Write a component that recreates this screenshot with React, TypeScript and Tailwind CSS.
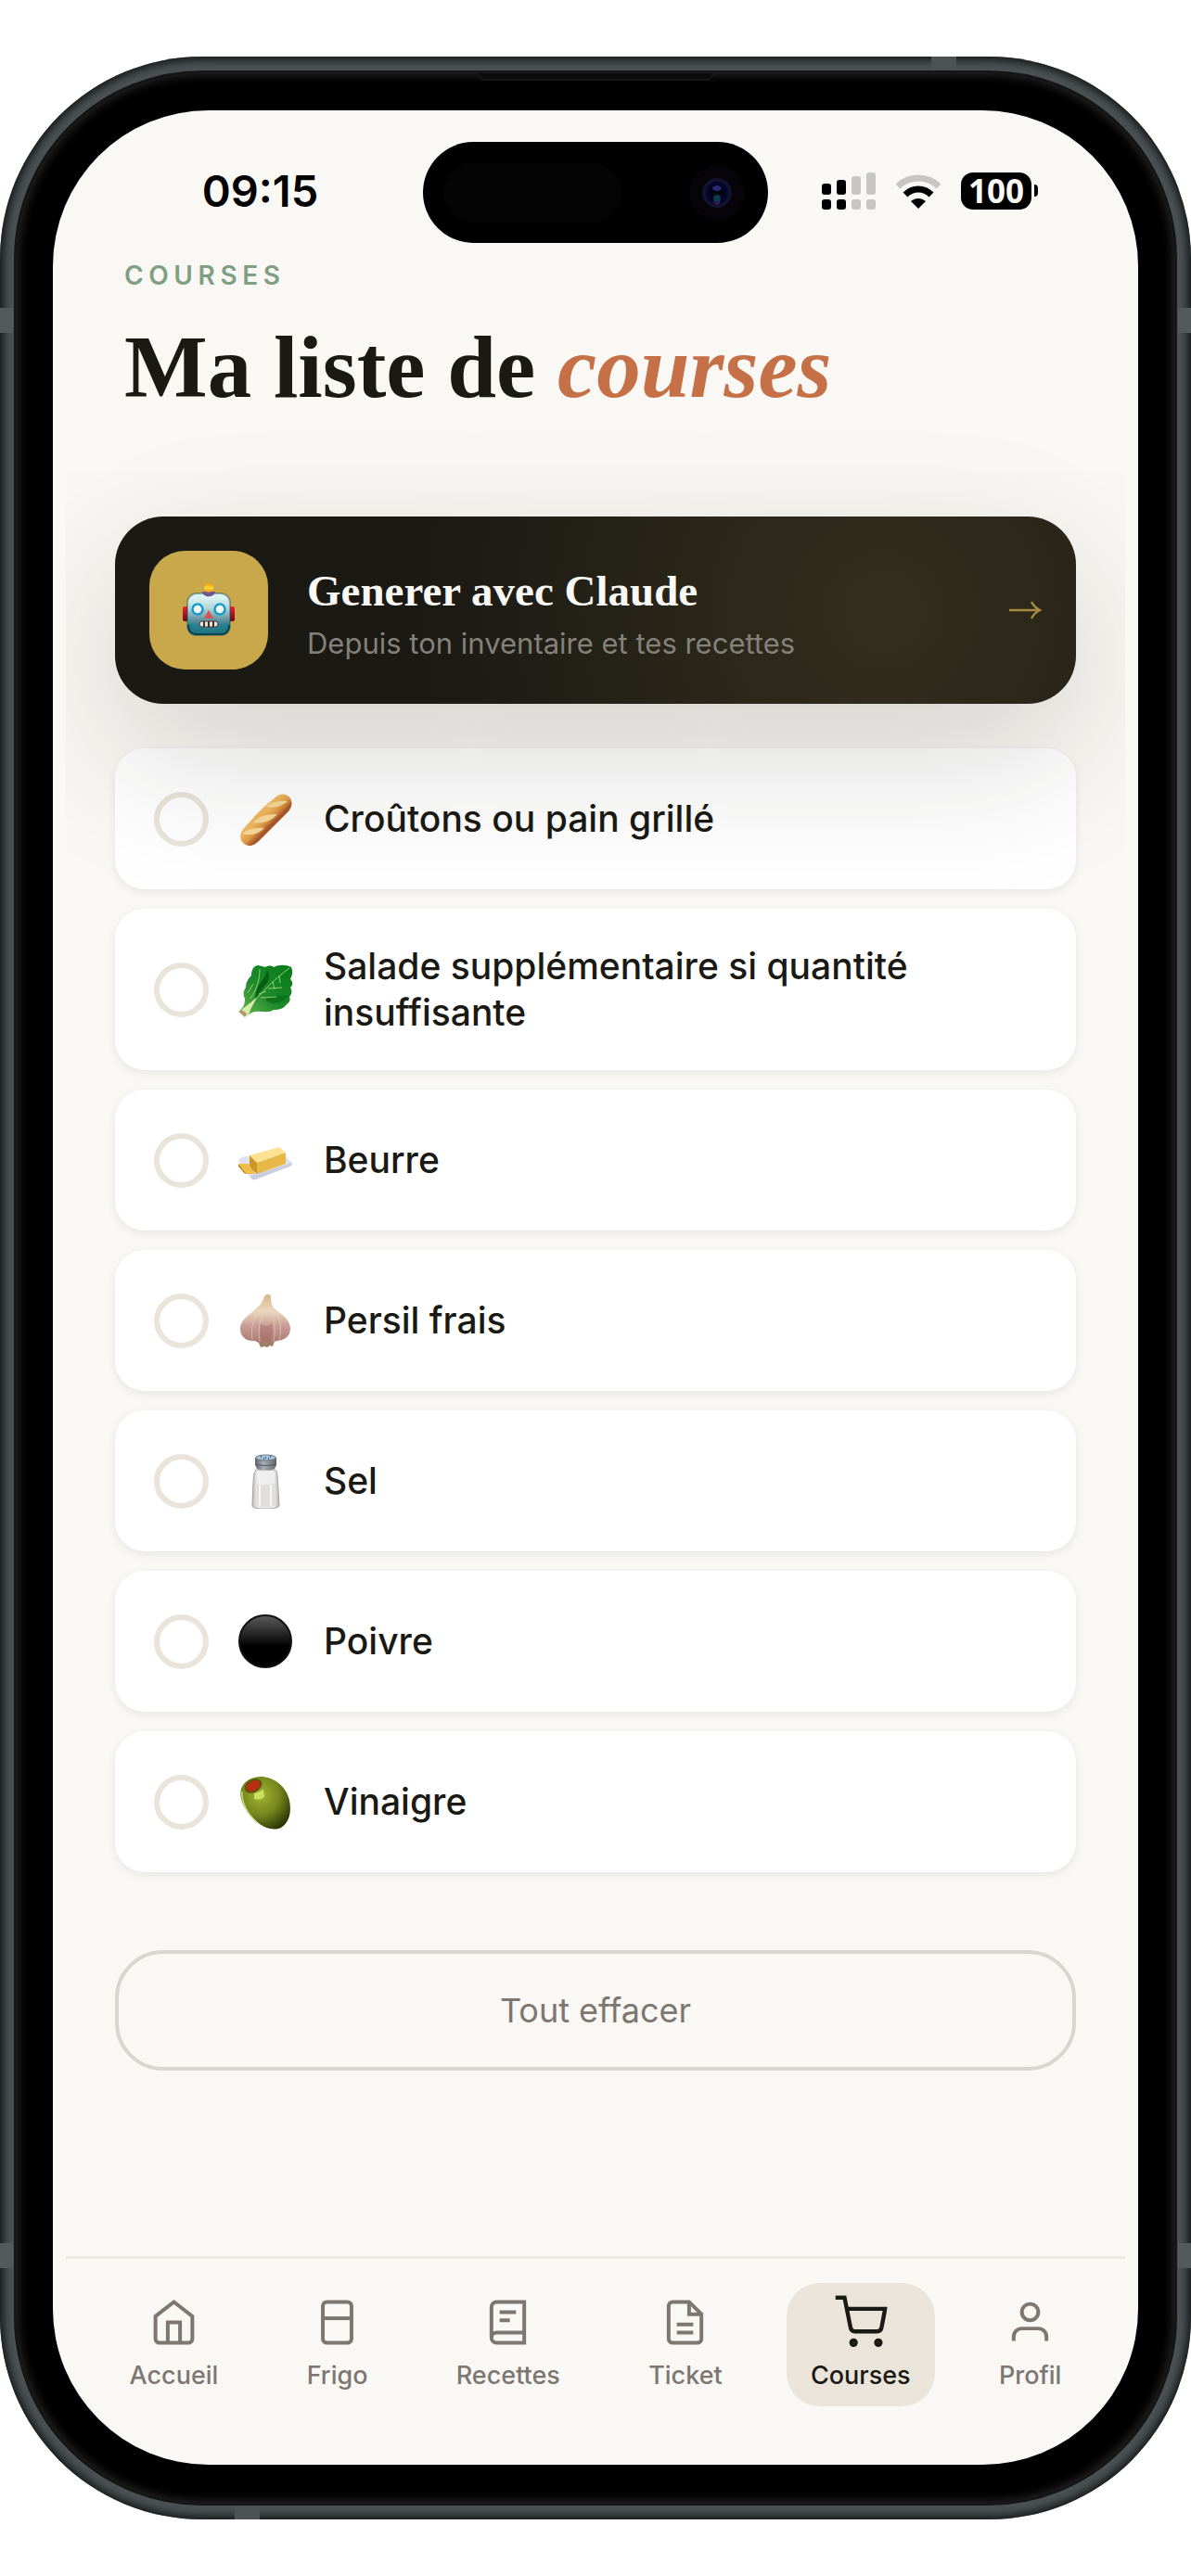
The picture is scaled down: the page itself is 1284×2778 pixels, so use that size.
import React, { useState } from "react";

const BaguetteIcon = () => (
  <svg viewBox="0 0 60 60" className="h-[60px] w-[60px]" aria-hidden="true">
    <defs>
      <linearGradient id="bread" x1="0.3" y1="0.3" x2="0.7" y2="0.7">
        <stop offset="0.3" stopColor="#f0b860" />
        <stop offset="0.55" stopColor="#e09a45" />
        <stop offset="0.75" stopColor="#a9562a" />
      </linearGradient>
    </defs>
    <path
      d="M42 6C47 2 54 3 57 8c3 5 1 11-3 15L24 53c-4 4-10 8-15 5-5-2-7-8-5-13 3-6 9-11 14-17S34 12 42 6z"
      fill="url(#bread)"
    />
    <path d="M30 17c7-5 14-7 24-6-6 5-14 8-24 6z" fill="#f6d999" />
    <path d="M17 34c6-7 14-9 26-9-6 7-16 11-26 9z" fill="#f6d999" />
    <path d="M5 46c6-5 14-7 24-6-6 6-15 9-24 6z" fill="#f6d999" />
  </svg>
);

const LettuceIcon = () => (
  <svg viewBox="0 0 60 60" className="h-[60px] w-[60px]" aria-hidden="true">
    <defs>
      <linearGradient id="leaf" x1="0" y1="1" x2="1" y2="0">
        <stop offset="0.1" stopColor="#5fae48" />
        <stop offset="0.45" stopColor="#1e8a2c" />
        <stop offset="1" stopColor="#067a18" />
      </linearGradient>
    </defs>
    <path
      d="M2 53c4-3 6-7 6-13-2-4-2-8 1-12 0-6 3-10 6-13 0-6 2-10 7-11 3 1 6 1 8 2 3-2 7-2 9 0 6-3 13-3 19 0 2 5 1 9-1 13 3 3 3 6 0 9 2 3 2 7-1 10 2 4-1 7-4 9-2 4-8 5-13 5-4 3-9 2-14 2-6-1-11 1-16 5z"
      fill="url(#leaf)"
    />
    <path d="M32 9c3 5 3 10-1 15L19 40c1-8 3-14 7-19 4-4 5-8 6-12z" fill="#075f14" />
    <path d="M31 38c8-1 15-2 24-1-4 5-9 8-16 8-5 0-9-2-8-7z" fill="#0a6a18" opacity=".7" />
    <path d="M56 7C42 17 27 32 12 50M45 15l1 8M38 21l2 9M48 28l-15 1M42 38l-17 1M31 32l-8 3M24 8c0 9-2 20-10 32M17 24l-6 10" stroke="#8fd070" strokeWidth="1" fill="none" />
    <path d="M2 54c5-5 12-9 18-15-2 7-6 11-7 16l-5 5z" fill="#d8ecae" />
    <path d="M1 54l7 6 2-4-5-4z" fill="#b39a70" />
  </svg>
);

const ButterIcon = () => (
  <svg viewBox="0 0 60 60" className="h-[60px] w-[60px]" aria-hidden="true">
    <path d="M1 31c1-3 4-4 7-5L49 23l9 9c2 2 1 4-2 5L20 50c-3 1-5 1-7-2z" fill="#dfe3f0" />
    <path d="M14 47l45-14c0 2-1 3-3 4L20 51c-3 1-5 0-6-4z" fill="#c9cfdf" />
    <path d="M13 25L45 16l7 6-31 11z" fill="#fde391" />
    <path d="M13 25l8 8v12l-8-7z" fill="#cf9526" />
    <path d="M21 33l31-11v12L21 45z" fill="#e6b847" />
    <path d="M1 34l11 0 7 11H10z" fill="#f0bd4b" />
    <path d="M1 34l9 11H8l-7-8z" fill="#c88a20" />
  </svg>
);

const GarlicIcon = () => (
  <svg viewBox="0 0 60 60" className="h-[60px] w-[60px]" aria-hidden="true">
    <defs>
      <linearGradient id="clove" x1="0" y1="0" x2="0" y2="1">
        <stop offset="0" stopColor="#d9b58d" />
        <stop offset="0.35" stopColor="#ead8bc" />
        <stop offset="0.65" stopColor="#c99b94" />
        <stop offset="1" stopColor="#a87a6e" />
      </linearGradient>
    </defs>
    <path d="M22 52h18l-2 6-3-1-3 2-3-1-4 1z" fill="#9a7f66" />
    <path
      d="M29 4c2-3 6-3 7 0 0 8 1 11 6 15 8 6 15 11 15 20 0 8-7 13-15 13-4 3-18 4-23 0C9 53 3 47 3 39c0-9 8-14 15-20 6-5 9-8 11-15z"
      fill="url(#clove)"
    />
    <path d="M30 15c-8 7-17 15-14 36M30 15c-4 12-9 20-6 38M34 15c5 10 8 22 5 38M35 15c8 8 15 16 10 36" stroke="#ecdccb" strokeWidth="1" fill="none" opacity=".5" />
    <path d="M25 33c-1 8-1 14 1 20h9c3-7 3-13 2-20-4 4-8 4-12 0z" fill="#9d635c" opacity=".4" />
  </svg>
);

const SaltIcon = () => (
  <svg viewBox="0 0 60 60" className="h-[60px] w-[60px]" aria-hidden="true">
    <defs>
      <linearGradient id="glass" x1="0" y1="0" x2="1" y2="0">
        <stop offset="0" stopColor="#b5b5b5" />
        <stop offset="0.2" stopColor="#f0f0f0" />
        <stop offset="0.8" stopColor="#eeeeee" />
        <stop offset="1" stopColor="#b5b5b5" />
      </linearGradient>
      <linearGradient id="cap" x1="0" y1="0" x2="1" y2="0">
        <stop offset="0" stopColor="#5d6368" />
        <stop offset="0.4" stopColor="#a9afb4" />
        <stop offset="1" stopColor="#5d6368" />
      </linearGradient>
    </defs>
    <path d="M20 18h21c3 3 2 12 4 38 0 3-5 4-15 4s-15-1-14-4c1-26 1-35 4-38z" fill="url(#glass)" stroke="#a3a3a3" strokeWidth="1" />
    <path d="M21 32l4 2h11l5-2 1 23-6 3H24l-4-3z" fill="#e1dfdd" />
    <path d="M24 34v23M36 34v23" stroke="#fff" strokeWidth="1.5" />
    <path d="M19 5h23v8l-2 4c-5 2-14 2-19 0l-2-4z" fill="url(#cap)" />
    <path d="M20 12c6 2 15 2 21 0" stroke="#50565b" strokeWidth="1" fill="none" />
    <ellipse cx="30.5" cy="5" rx="11" ry="3" fill="#a8c3dc" stroke="#6c747b" strokeWidth="1" />
    <path d="M25 4h1M30 5h1M35 4h1M28 6h1M33 6h1" stroke="#2c3c4c" strokeWidth="1.5" />
  </svg>
);

const PepperIcon = () => (
  <svg viewBox="0 0 60 60" className="h-[60px] w-[60px]" aria-hidden="true">
    <defs>
      <linearGradient id="ball" x1="0" y1="0" x2="0" y2="1">
        <stop offset="0" stopColor="#5c5c5c" />
        <stop offset="0.6" stopColor="#000" />
      </linearGradient>
    </defs>
    <circle cx="30" cy="30" r="28" fill="url(#ball)" stroke="#111" strokeWidth="2" />
  </svg>
);

const OliveIcon = () => (
  <svg viewBox="0 0 60 60" className="h-[60px] w-[60px]" aria-hidden="true">
    <defs>
      <radialGradient id="olive" cx="0.4" cy="0.35" r="0.7">
        <stop offset="0" stopColor="#a3b433" />
        <stop offset="0.55" stopColor="#75861c" />
        <stop offset="1" stopColor="#2f3a08" />
      </radialGradient>
    </defs>
    <path
      d="M25 3c14 0 26 10 30 22 4 13 2 27-8 33-9 4-20 0-29-9C8 40 1 27 4 16 7 8 15 3 25 3z"
      fill="url(#olive)"
    />
    <path d="M5 19c-1 12 6 25 17 34" stroke="#cbd98a" strokeWidth="1.5" fill="none" />
    <ellipse cx="17" cy="13" rx="10" ry="7" transform="rotate(-28 17 13)" fill="#4c5a10" />
    <ellipse cx="17" cy="13" rx="8.5" ry="5.5" transform="rotate(-28 17 13)" fill="#b5300f" />
    <path d="M18 21c3-1 7-2 10-4l1 8c-3 3-8 3-11 2z" fill="#d5ee6c" opacity=".8" />
  </svg>
);

const RobotIcon = () => (
  <svg viewBox="0 0 60 60" className="h-[60px] w-[60px]" aria-hidden="true">
    <defs>
      <linearGradient id="head" x1="0" y1="0" x2="0" y2="1">
        <stop offset="0.1" stopColor="#dcf3f4" />
        <stop offset="0.35" stopColor="#b4d6da" />
        <stop offset="0.65" stopColor="#5d8f98" />
        <stop offset="0.75" stopColor="#2a8190" />
        <stop offset="1" stopColor="#1d7080" />
      </linearGradient>
      <linearGradient id="bulb" x1="0" y1="0" x2="0" y2="1">
        <stop offset="0" stopColor="#f79a00" />
        <stop offset="0.5" stopColor="#ffd83a" />
        <stop offset="1" stopColor="#f58a12" />
      </linearGradient>
      <linearGradient id="ear" x1="0" y1="0" x2="0" y2="1">
        <stop offset="0" stopColor="#f2202f" />
        <stop offset="1" stopColor="#6a0610" />
      </linearGradient>
    </defs>
    <rect x="2" y="26" width="6" height="16" rx="2" fill="url(#ear)" />
    <rect x="52" y="26" width="6" height="16" rx="2" fill="url(#ear)" />
    <rect x="7" y="12" width="46" height="45" rx="10" fill="url(#head)" stroke="#0d5360" strokeOpacity=".4" strokeWidth="2" />
    <path d="M8 46c0 7 3 10 9 10h26c6 0 9-3 9-10" stroke="#064654" strokeWidth="2" fill="none" />
    <path d="M23 10h14c-1 7-13 7-14 0z" fill="#6d5594" />
    <circle cx="30" cy="6" r="5" fill="url(#bulb)" />
    <circle cx="18" cy="29" r="5.5" fill="#f3fbfd" stroke="#159ccb" strokeWidth="2.5" />
    <circle cx="42" cy="29" r="5.5" fill="#f3fbfd" stroke="#159ccb" strokeWidth="2.5" />
    <path d="M30 30l5 9H25z" fill="#d9505a" />
    <rect x="20" y="42" width="20" height="6" rx="3" fill="#e9e5da" stroke="#4c3e3a" strokeWidth="1" />
    <path d="M25 42v6M30 42v6M35 42v6" stroke="#3b302d" strokeWidth="2" />
  </svg>
);

const ITEMS = [
  { name: "Croûtons ou pain grillé", icon: <BaguetteIcon /> },
  { name: "Salade supplémentaire si quantité insuffisante", icon: <LettuceIcon /> },
  { name: "Beurre", icon: <ButterIcon /> },
  { name: "Persil frais", icon: <GarlicIcon /> },
  { name: "Sel", icon: <SaltIcon /> },
  { name: "Poivre", icon: <PepperIcon /> },
  { name: "Vinaigre", icon: <OliveIcon /> },
];

const TABS = [
  {
    label: "Accueil",
    shape: (
      <>
        <path d="M3 9l9-7 9 7v11a2 2 0 0 1-2 2H5a2 2 0 0 1-2-2z" />
        <path d="M9 22V12h6v10" />
      </>
    ),
  },
  {
    label: "Frigo",
    shape: (
      <>
        <rect x="5" y="2" width="14" height="20" rx="2" />
        <path d="M5 10h14" />
      </>
    ),
  },
  {
    label: "Recettes",
    shape: (
      <>
        <path d="M4 19.5A2.5 2.5 0 0 1 6.5 17H20" />
        <path d="M6.5 2H20v20H6.5A2.5 2.5 0 0 1 4 19.5v-15A2.5 2.5 0 0 1 6.5 2z" />
        <path d="M8 7h8M8 11h5" />
      </>
    ),
  },
  {
    label: "Ticket",
    shape: (
      <>
        <path d="M14 2H6a2 2 0 0 0-2 2v16a2 2 0 0 0 2 2h12a2 2 0 0 0 2-2V8z" />
        <path d="M14 2v6h6M8 13h8M8 17h8" />
      </>
    ),
  },
  {
    label: "Courses",
    active: true,
    shape: (
      <>
        <circle cx="9" cy="21" r="1" />
        <circle cx="20" cy="21" r="1" />
        <path d="M1 1h4l2.68 13.39a2 2 0 0 0 2 1.61h9.72a2 2 0 0 0 2-1.61L23 6H6" />
      </>
    ),
  },
  {
    label: "Profil",
    shape: (
      <>
        <path d="M20 21v-2a4 4 0 0 0-4-4H8a4 4 0 0 0-4 4v2" />
        <circle cx="12" cy="7" r="4" />
      </>
    ),
  },
];

function StatusBar() {
  return (
    <div className="grid grid-cols-[1fr_372px_1fr] items-center pt-[34px]">
      <div className="pb-[4px] pl-[48px] text-center text-[47px] leading-[56px] font-semibold text-black">09:15</div>

      {/* Dynamic island */}
      <div className="flex h-[109px] items-center justify-between rounded-full bg-black pr-[25px] pl-[22px]">
        <div className="h-[65px] w-[192px] rounded-full bg-[#040404]" />
        <svg viewBox="0 0 60 60" className="h-[60px] w-[60px]" aria-hidden="true">
          <circle cx="30" cy="30" r="30" fill="#060408" />
          <circle cx="30" cy="30" r="16" fill="#11142c" />
          <circle cx="30" cy="30" r="12" fill="#050530" />
          <ellipse cx="30" cy="30" rx="8" ry="9" fill="#02030f" />
          <ellipse cx="30" cy="25" rx="5" ry="3" fill="#262b70" />
          <circle cx="30" cy="36" r="4" fill="#0a3a50" />
          <path d="M27 40c2 2 4 2 6 0" stroke="#52206a" strokeWidth="1.5" fill="none" />
        </svg>
      </div>

      <div className="flex items-center justify-center gap-[20px] pr-[50px] pb-[4px]">
        <svg viewBox="0 0 58 40" className="h-[40px] w-[58px]" aria-label="Signal">
          <g fill="#000">
            <rect x="0" y="12" width="10" height="12" rx="3" />
            <rect x="16" y="8" width="10" height="16" rx="3" />
            <rect x="0" y="29" width="10" height="11" rx="3" />
            <rect x="16" y="29" width="10" height="11" rx="3" />
          </g>
          <g fill="#c7c6c2">
            <rect x="32" y="4" width="10" height="20" rx="3" />
            <rect x="48" y="0" width="10" height="24" rx="3" />
            <rect x="32" y="29" width="10" height="11" rx="3" />
            <rect x="48" y="29" width="10" height="11" rx="3" />
          </g>
        </svg>
        <svg viewBox="0 0 52 38" className="h-[38px] w-[52px]" aria-label="Wi-Fi">
          <path d="M4 14C16 2 36 2 48 14" stroke="#c7c6c2" strokeWidth="7" fill="none" />
          <path d="M12 23c8-8 20-8 28 0" stroke="#000" strokeWidth="7" fill="none" />
          <path d="M18 30c5-4 11-4 16 0l-8 8z" fill="#000" />
        </svg>
        <div className="flex items-center gap-[3px]">
          <div className="flex h-[40px] w-[76px] items-center justify-center rounded-[13px] bg-black font-['Open_Sans',sans-serif] text-[35px] leading-[40px] font-bold text-[#faf8f4]">
            100
          </div>
          <div className="h-[13px] w-[4px] rounded-r-full bg-black" />
        </div>
      </div>
    </div>
  );
}

function ClaudeCard() {
  return (
    <button
      type="button"
      className="relative z-10 flex w-full items-center rounded-[52px] bg-[#1a1914] bg-[radial-gradient(circle_at_80%_50%,rgba(201,168,76,0.15),transparent_60%)] p-[37px] text-left shadow-[0_53px_159px_rgba(26,25,20,0.18)]"
    >
      <span className="flex h-[128px] w-[128px] shrink-0 items-center justify-center rounded-[38px] bg-[#c9a84c]">
        <RobotIcon />
      </span>
      <span className="ml-[42px] flex flex-1 flex-col gap-[8px] pt-[4px]">
        <span className="font-['Liberation_Serif',serif] text-[47px] leading-[60px] font-bold text-[#faf8f4]">
          Generer avec Claude
        </span>
        <span className="text-[31px] leading-[38px] text-[#84817a]">
          Depuis ton inventaire et tes recettes
        </span>
      </span>
      <svg viewBox="0 0 36 20" className="h-[20px] w-[36px] shrink-0" fill="none" stroke="#a88a3f" strokeWidth="2.5" aria-hidden="true">
        <path d="M1 10h33M25 1c2 4 5 7 9 9-4 2-7 5-9 9" />
      </svg>
    </button>
  );
}

function ShoppingItem({ name, icon }: { name: string; icon: React.ReactNode }) {
  const [checked, setChecked] = useState(false);

  return (
    <li>
      <label className="flex cursor-pointer items-center rounded-[32px] bg-white px-[42px] py-[37px] shadow-[0_3px_10px_rgba(26,25,20,0.08)]">
        <input
          type="checkbox"
          checked={checked}
          onChange={() => setChecked(!checked)}
          className="h-[59px] w-[59px] shrink-0 appearance-none rounded-full border-[6px] border-[#eae4da] checked:bg-[#7f9f83]"
        />
        <span className="ml-[31px] flex h-[78px] w-[60px] shrink-0 items-center justify-center">{icon}</span>
        <span className="ml-[33px] text-[39px] leading-[50px] font-medium text-[#1a1914]">{name}</span>
      </label>
    </li>
  );
}

function TabBar() {
  return (
    <nav className="mx-[14px] flex justify-around border-t-[3px] border-[#ebe9e4] px-[21px] pt-[26px] pb-[63px]">
      {TABS.map((tab) => (
        <a
          key={tab.label}
          href={`#${tab.label.toLowerCase()}`}
          className={
            tab.active
              ? "flex flex-col items-center gap-[15px] rounded-[36px] bg-[#ebe4da] px-[26px] pt-[16px] pb-[17px] text-[#1a1914]"
              : "flex flex-col items-center gap-[15px] px-[26px] pt-[16px] pb-[17px] text-[#7d7671]"
          }
        >
          <svg
            viewBox="0 0 24 24"
            className={tab.active ? "h-[53px] w-[53px] scale-110" : "h-[53px] w-[53px]"}
            fill="none"
            stroke="currentColor"
            strokeWidth="1.8"
            aria-hidden="true"
          >
            {tab.shape}
          </svg>
          <span className="text-[27px] leading-[32px] font-medium">{tab.label}</span>
        </a>
      ))}
    </nav>
  );
}

export default function App() {
  return (
    <div className="min-h-screen bg-white py-[61px] font-['Inter','Liberation_Sans',sans-serif]">
      <div className="relative rounded-[218px] bg-[#4c5153] p-[15px] shadow-[inset_0_0_9px_4px_#15191a]">
        {/* Antenna bands */}
        <div className="absolute top-[271px] left-0 h-[27px] w-[14px] bg-[#545959]" />
        <div className="absolute top-[271px] right-0 h-[27px] w-[14px] bg-[#545959]" />
        <div className="absolute bottom-[271px] left-0 h-[27px] w-[14px] bg-[#545959]" />
        <div className="absolute right-0 bottom-[271px] h-[27px] w-[14px] bg-[#545959]" />
        <div className="absolute top-0 right-[253px] h-[15px] w-[27px] bg-[#4d5354]" />
        <div className="absolute bottom-0 left-[253px] h-[15px] w-[27px] bg-[#4d5354]" />

        <div className="relative rounded-[203px] border-2 border-[#141617] bg-black px-[40px] pt-[41px] pb-[42px] shadow-[inset_0_0_12px_2px_#2c2c2c]">
          {/* Speaker slot */}
          <svg viewBox="0 0 258 9" className="absolute top-0 left-1/2 h-[9px] w-[258px] -translate-x-1/2" aria-hidden="true">
            <path d="M0 0h258c-4 1-3 8-8 8H8C3 8 4 1 0 0z" fill="#0b0b0b" stroke="#242424" />
          </svg>

          <div className="rounded-[168px] bg-[#faf8f4]">
            <StatusBar />

            <main className="mx-[14px] overflow-hidden px-[53px] pt-[17px] pb-[200px]">
              <header className="px-[10px]">
                <p className="text-[28px] leading-[36px] font-semibold tracking-[0.2em] text-[#7f9f83]">COURSES</p>
                <h1 className="mt-[28px] font-['Liberation_Serif',serif] text-[95px] leading-[106px] font-bold text-[#1a1914]">
                  Ma liste de <em className="text-[#c67048]">courses</em>
                </h1>
              </header>

              <div className="mt-[108px]">
                <ClaudeCard />
              </div>

              <ul className="mt-[48px] flex flex-col gap-[21px]">
                {ITEMS.map((item) => (
                  <ShoppingItem key={item.name} name={item.name} icon={item.icon} />
                ))}
              </ul>

              <button
                type="button"
                className="mt-[84px] w-full rounded-[52px] border-4 border-[#d8d6d1] py-[36px] text-[36px] leading-[50px] text-[#7d7671]"
              >
                Tout effacer
              </button>
            </main>

            <TabBar />
          </div>
        </div>
      </div>
    </div>
  );
}
